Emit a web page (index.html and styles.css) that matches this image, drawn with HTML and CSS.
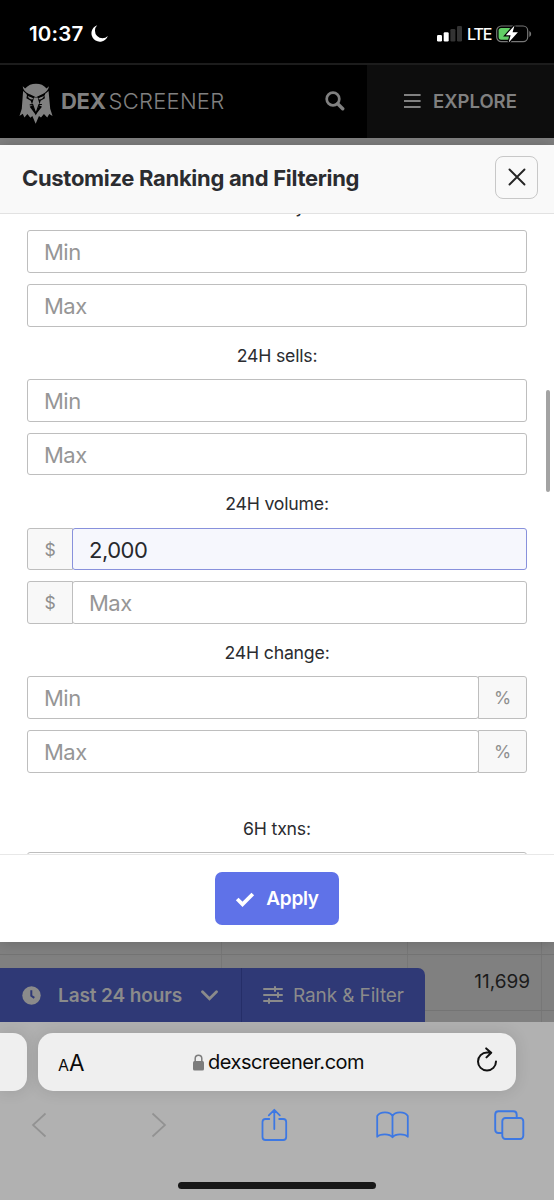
FILE: index.html
```html
<!DOCTYPE html>
<html lang="en">
<head>
<meta charset="utf-8">
<title>DEX Screener</title>
<link rel="stylesheet" href="styles.css">
</head>
<body>
<header class="status">
  <span class="time">10:37</span>
  <svg class="moon" width="17" height="17" viewBox="0 0 17 17"><path d="M6.2.3A8.4 8.4 0 1 0 16.8 11 7 7 0 0 1 6.2.3Z" fill="#fff"/></svg>
  <svg class="signal" width="25" height="16" viewBox="0 0 25 16"><g fill="#fff"><rect y="9" width="5" height="6.5" rx="1.2"/><rect x="6.7" y="6.3" width="5" height="9.2" rx="1.2"/></g><g fill="#333"><rect x="13.4" y="3" width="5" height="12.5" rx="1.2"/><rect x="20" y="0" width="5" height="15.5" rx="1.2"/></g></svg>
  <span class="lte">LTE</span>
  <svg class="battery" width="36" height="18" viewBox="0 0 36 18"><rect x=".7" y="1" width="31" height="15.6" rx="4.6" fill="none" stroke="#777" stroke-width="1.2"/><path d="M33.3 6v6q1.9-1 1.9-3T33.3 6Z" fill="#777"/><rect x="2.6" y="3" width="13" height="11.7" rx="2.6" fill="#62cf66"/><path d="M18.5.5 9.8 10.2h4.8l-1.9 7.3 9.2-10.2h-5.3Z" fill="#fff" stroke="#000" stroke-width="2.4" paint-order="stroke"/></svg>
</header>
<nav class="nav">
  <svg class="owl" width="34" height="41" viewBox="58 250 102 124">
    <path fill="#808080" d="M76 267C85 256 96 252 109 252s24 4 32 15l7-7c-2 14-12 21-22 25l-17 8-17-8c-11-4-22-11-23-25Z"/>
    <path fill="#808080" d="M70 274 82 285 80 296 93 304 98 317 90 322 108 346 127 322 119 317 123 304 136 296 134 285 147 274 152 328 159 350 149 344 143 354 133 344 124 354 118 350 108 373 98 350 92 355 83 344 74 354 69 343 59 350 66 328Z"/>
    <path fill="#808080" d="M84 289 101 295 98 300Q87 299 84 289ZM133 289 116 295 119 300Q130 299 133 289ZM103 294h11l6 21-11 25-12-25Z"/>
    <path fill="none" stroke="#000" stroke-width="3.4" d="M81 284 101 294M136 284 116 294M90 316l9-1 9.500 28 9.500-28h9"/>
  </svg>
  <span class="brand"><b>DEX</b><span class="light">SCREENER</span></span>
  <svg class="search" width="20" height="20" viewBox="0 0 20 20" fill="none" stroke="#808080"><circle cx="8" cy="8" r="6.3" stroke-width="2.7"/><path d="m12.7 12.7 5 5" stroke-width="3.4" stroke-linecap="round"/></svg>
  <div class="explore">
    <svg width="17" height="16" viewBox="0 0 17 16"><path d="M0 2h16.6M0 8h16.6M0 14h16.6" stroke="#808080" stroke-width="2"/></svg>
    <span>EXPLORE</span>
  </div>
</nav>
<main class="modal">
  <div class="modal-head">
    <h1>Customize Ranking and Filtering</h1>
    <button class="close"><svg width="18" height="18" viewBox="0 0 18 18"><path d="m1.5 1.5 15 15m0-15-15 15" stroke="#252525" stroke-width="1.9" stroke-linecap="round"/></svg></button>
  </div>
  <div class="modal-body">
    <div class="fields">
      <section class="group"><h2>24H buys:</h2><div class="field"><span class="value">Min</span></div><div class="field"><span class="value">Max</span></div></section>
      <section class="group"><h2>24H sells:</h2><div class="field"><span class="value">Min</span></div><div class="field"><span class="value">Max</span></div></section>
      <section class="group"><h2>24H volume:</h2><div class="field"><span class="unit pre">$</span><span class="value filled">2,000</span></div><div class="field"><span class="unit pre">$</span><span class="value">Max</span></div></section>
      <section class="group"><h2>24H change:</h2><div class="field"><span class="value">Min</span><span class="unit post">%</span></div><div class="field"><span class="value">Max</span><span class="unit post">%</span></div></section>
      <section class="group period"><h2>6H txns:</h2><div class="field"><span class="value"></span></div></section>
    </div>
    <div class="scrollbar"></div>
  </div>
  <div class="modal-foot">
    <button class="apply"><svg width="20" height="16" viewBox="0 0 20 16"><path d="m2.2 8 5.3 5.3L17.8 3" fill="none" stroke="#fff" stroke-width="3.8"/></svg><span>Apply</span></button>
  </div>
</main>
<div class="page">
  <div class="tabs">
    <div class="tab period-tab">
      <svg width="19" height="19" viewBox="0 0 19 19"><circle cx="9.5" cy="9.5" r="9.2" fill="#8b8b8b"/><path d="M9.3 4.2v5.5l3 2.2" fill="none" stroke="#2f3976" stroke-width="2"/></svg>
      <span class="hours">Last 24 hours</span>
      <svg width="17" height="11" viewBox="0 0 17 11"><path d="m1.5 1.7 7 7 7-7" fill="none" stroke="#8b8b8b" stroke-width="2.8" stroke-linecap="round"/></svg>
    </div>
    <div class="tab rank-tab">
      <svg width="20" height="18" viewBox="0 0 20 18" fill="none" stroke="#8b8b8b" stroke-width="2" stroke-linecap="round"><path d="M1 3h18M1 9h18M1 15h18"/><path d="M12 1v4M15 7v4M6 13v4"/></svg>
      <span class="rank">Rank &amp; Filter</span>
    </div>
  </div>
  <div class="cell">11,699</div>
</div>
<footer class="safari">
  <div class="address-row">
    <div class="prev-tab"></div>
    <div class="address">
      <span class="aa"><small>A</small>A</span>
      <span class="domain"><svg width="11" height="17" viewBox="0 0 11 17"><rect y="7" width="11" height="9.5" rx="1.5" fill="#7c7c7c"/><path d="M2.2 8V4.500a3.300 3.300 0 0 1 6.600 0V8" fill="none" stroke="#7c7c7c" stroke-width="1.5"/></svg><span>dexscreener.com</span></span>
      <svg class="reload" width="22" height="26" viewBox="0 0 22 26" fill="none" stroke="#111" stroke-width="2" stroke-linecap="round" stroke-linejoin="round"><path d="M20 14.500A9 9 0 1 1 11 5.500h4M10.200 1.400l5 4.300-4.700 4.700"/></svg>
    </div>
  </div>
  <div class="tools">
    <svg width="16" height="26" viewBox="0 0 16 26"><path d="M14.500 1.500 2 13l12.500 11.500" fill="none" stroke="#929292" stroke-width="1.7"/></svg>
    <svg width="16" height="26" viewBox="0 0 16 26"><path d="m1.500 1.500 12.500 11.500L1.500 24.500" fill="none" stroke="#929292" stroke-width="1.7"/></svg>
    <svg width="27" height="34" viewBox="0 0 27 34" fill="none" stroke="#3d78e3" stroke-width="1.8" stroke-linecap="round" stroke-linejoin="round"><path d="M8.300 11H4.500Q1.500 11 1.500 14v15q0 3 3 3h17.700q3 0 3-3V14q0-3-3-3h-4M13.300 21V2M7.800 7.300 13.300 1.800l5.500 5.500"/></svg>
    <svg width="33" height="28" viewBox="0 0 33 28" fill="none" stroke="#3d78e3" stroke-width="1.8" stroke-linejoin="round"><path d="M16.500 26.300V5Q14.500 1.400 9 1.400T1.200 5v20.800Q3.200 23.300 8.800 23.300t7.700 3q2-3 7.700-3t7.600 2.500V5Q29.500 1.400 24 1.400T16.500 5"/></svg>
    <svg width="31" height="31" viewBox="0 0 31 31" fill="none" stroke="#3d78e3" stroke-width="1.9"><path d="M8 23H4.500Q1.200 23 1.200 19.500V4.700q0-3.400 3.400-3.400h14.700q3.400 0 3.400 3.400V8"/><rect x="8.300" y="8" width="21" height="21" rx="3.2"/></svg>
  </div>
  <div class="home"></div>
</footer>
</body>
</html>
```
FILE: styles.css
```css
* { box-sizing: border-box; }
body { margin: 0; width: 554px; height: 1200px; overflow: hidden; background: #808080; font-family: Inter, "Liberation Sans", sans-serif; color: #2b2c30; }
svg { display: block; flex: none; }
button { font: inherit; padding: 0; }
span { white-space: nowrap; }

.status { height: 65px; background: #000; border-bottom: 2px solid #1c1c1c; display: flex; align-items: center; padding: 4px 24px 0 29px; color: #fff; }
.time { width: 62px; font-size: 20.5px; font-weight: 600; letter-spacing: .2px; }
.signal { margin-left: auto; margin-right: 5px; }
.lte { font-size: 16px; font-weight: 500; width: 29px; letter-spacing: -1.1px; }
.battery { margin-right: -2px; }

.nav { height: 73px; background: #000; display: flex; align-items: center; color: #808080; padding: 0 0 2px 19px; }
.owl { margin: 5px 8px 0 0; }
.brand { font-size: 22px; display: flex; gap: 3px; width: 264px; }
.brand b { font-weight: 700; letter-spacing: -.3px; }
.light { font-weight: 300; letter-spacing: .25px; }
.explore { margin: 0 0 -2px auto; width: 187px; height: 73px; background: #0d0d0d; display: flex; align-items: center; gap: 12px; padding: 0 0 2px 37px; font-size: 18.5px; font-weight: 600; }

.modal { margin-top: 7px; height: 797px; background: #fff; display: flex; flex-direction: column; box-shadow: 0 0 14px rgba(0,0,0,.2); position: relative; }
.modal-head { height: 69px; background: #f9f9f9; border-bottom: 1px solid #e2e2e2; display: flex; align-items: center; justify-content: space-between; padding: 0 16px 4px 22px; }
h1 { margin: 2px 0 0; font-size: 22px; font-weight: 700; line-height: 28px; letter-spacing: -.31px; white-space: nowrap; }
.close { width: 43px; height: 43px; border: 1.5px solid #c8c8c8; border-radius: 8px; background: #f9f9f9; display: grid; place-items: center; }
.modal-body { height: 640px; overflow: hidden; display: flex; }
.fields { width: 500px; margin: -36px 0 0 27px; flex: none; }
.group { height: 148.7px; display: flex; flex-direction: column; gap: 11px; }
.group h2 { margin: 0 0 -11px; height: 52.4px; flex: none; padding-top: 5px; font-size: 17.7px; font-weight: 400; line-height: 47px; letter-spacing: -.2px; text-align: center; }
.period { margin-top: 27px; }
.field { height: 42.6px; flex: none; display: flex; }
.value { flex: 1; border: 1px solid #bebebe; border-radius: 3px; color: #969696; font-size: 22px; line-height: 42px; letter-spacing: -.5px; padding-left: 16px; }
.filled { border-color: #8891dc; background: #f6f7fd; color: #27282c; }
.unit { background: #f8f8f8; border: 1px solid #bebebe; color: #8f8f8f; font-size: 17.5px; line-height: 41px; text-align: center; }
.pre { width: 46px; margin-right: -1px; border-radius: 3px 0 0 3px; }
.post { width: 49px; margin-left: -1px; border-radius: 0 3px 3px 0; }
.scrollbar { width: 4px; height: 102px; margin: 176px 0 0 19px; border-radius: 2px; background: #a3a3a3; }
.modal-foot { height: 88px; border-top: 1px solid #e8e8e8; display: flex; justify-content: center; padding-top: 17px; }
.apply { width: 124px; height: 53px; border: 0; border-radius: 7px; background: #5f72e8; color: #fff; display: flex; align-items: center; justify-content: center; gap: 11px; font-size: 19px; font-weight: 600; letter-spacing: -.3px; }

.page { height: 80px; display: flex; align-items: flex-end; background: linear-gradient(#747474,#747474) 0 12px/100% 1px no-repeat, linear-gradient(#747474,#747474) 0 68px/100% 1px no-repeat, linear-gradient(#777,#777) 221px 0/1px 100% no-repeat, linear-gradient(#777,#777) 407px 0/1px 100% no-repeat, linear-gradient(#777,#777) 541px 0/1px 100% no-repeat, #808080; }
.tabs { width: 425px; height: 54px; background: #2f3976; border-radius: 0 7px 0 0; display: flex; color: #8b8b8b; font-size: 19px; }
.tab { display: flex; align-items: center; }
.period-tab { width: 242px; padding-left: 22px; border-right: 1px solid #252e68; font-weight: 600; }
.hours { width: 143px; margin-left: 17px; letter-spacing: -.1px; }
.rank-tab { padding-left: 21px; gap: 10px; letter-spacing: -.12px; }
.cell { width: 105px; height: 54px; text-align: right; font-size: 19px; line-height: 28px; color: #1b1b1b; }

.safari { height: 178px; background: #b1b1b1; position: relative; overflow: hidden; }
.address-row { display: flex; gap: 11px; padding-top: 11px; }
.prev-tab { width: 27px; height: 58px; background: #efefef; border-radius: 0 14px 14px 0; box-shadow: 0 0 16px rgba(0,0,0,.12); }
.address { width: 478px; height: 58px; background: #efefef; border-radius: 15px; box-shadow: 0 0 16px rgba(0,0,0,.12); display: flex; align-items: center; padding: 0 18px 0 20px; color: #0b0b0b; }
.aa { width: 135px; font-size: 22.5px; }
.aa small { font-size: 16px; }
.domain { display: flex; align-items: center; gap: 4px; font-size: 20px; letter-spacing: -.48px; }
.reload { margin-left: auto; margin-bottom: 4px; }
.tools { display: grid; grid-template-columns: 120px 110px 115px 118px 31px; align-items: center; height: 34px; margin-top: 17px; padding: 0 29px 0 31px; }
.home { width: 198px; height: 7px; margin: 40px 0 0 178px; border-radius: 4px; background: #171717; }
```
